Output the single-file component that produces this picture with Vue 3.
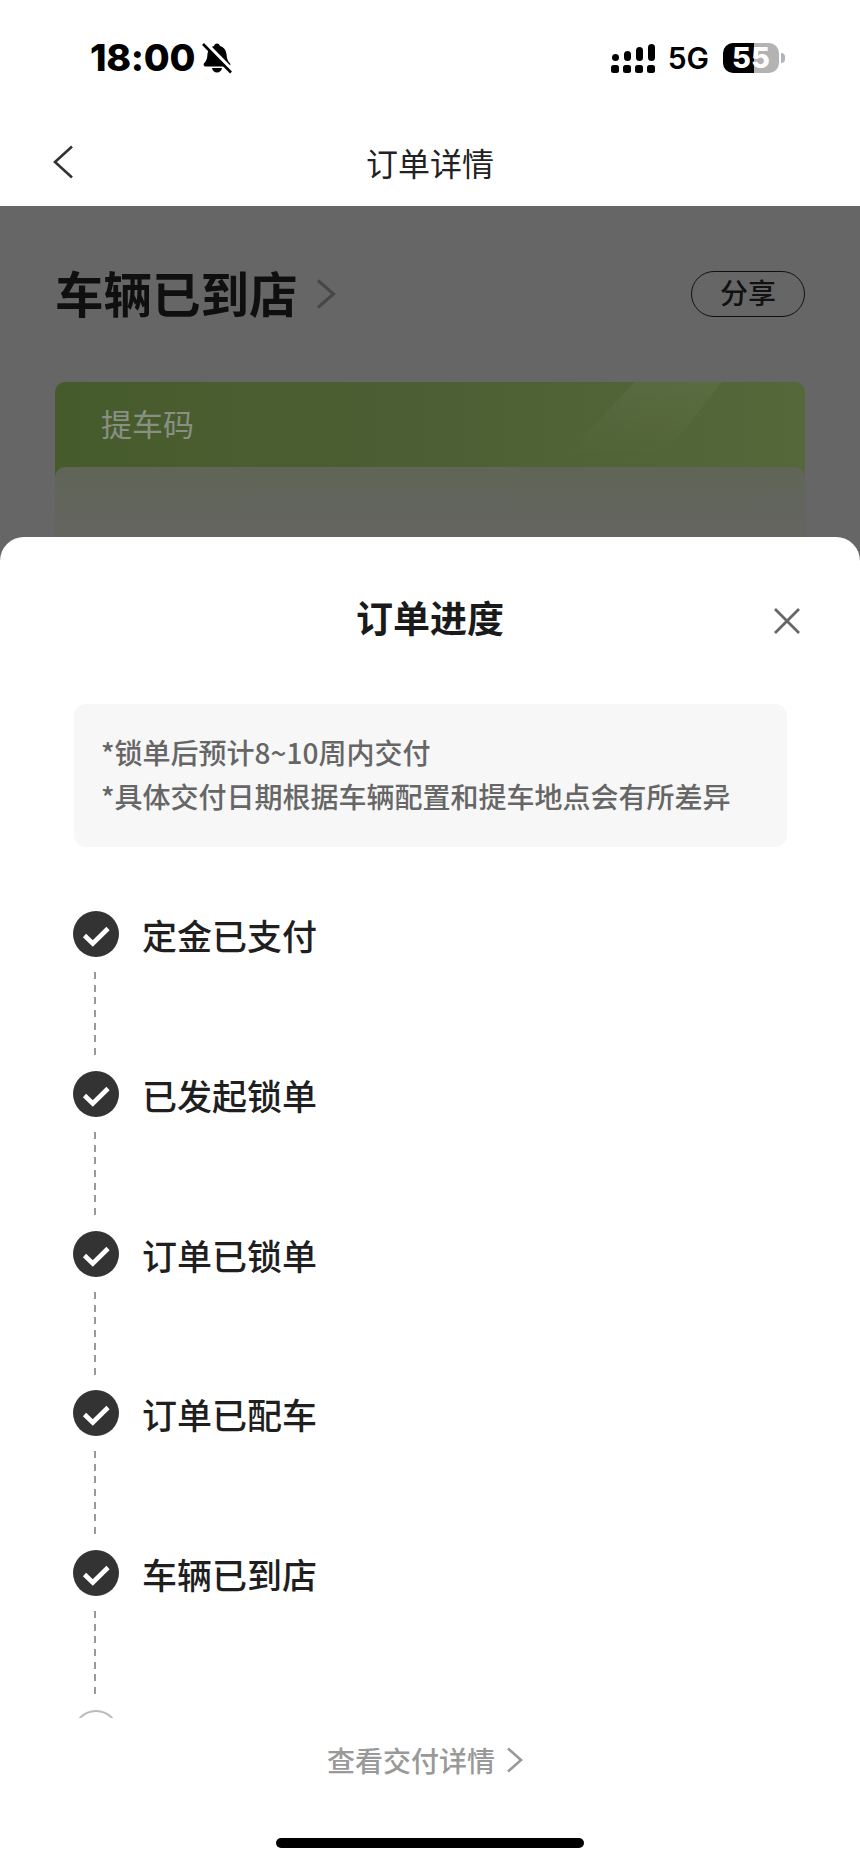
<script setup>
const steps = ['定金已支付', '已发起锁单', '订单已锁单', '订单已配车', '车辆已到店']
const signalCols = [
  { h: 7 },
  { h: 10 },
  { h: 14 },
  { h: 17 }
]
</script>

<template>
  <div class="page">
    <header class="status">
      <div class="status-left">
        <span class="time">18:00</span>
        <svg class="bell" width="30" height="32" viewBox="0 0 30 32">
          <path d="M15 1.500c1.600 0 2.700 1 2.900 2.400 4.200 1.200 6.500 4.700 6.700 9 .2 3.600 1 5.900 3.300 8.300 1.100 1.200.3 3.300-1.400 3.300H3.500c-1.700 0-2.500-2.100-1.400-3.300 2.300-2.400 3.100-4.700 3.300-8.300.2-4.300 2.500-7.800 6.700-9C12.300 2.500 13.400 1.500 15 1.500z" fill="#000"/>
          <path d="M10 26h10c-.5 2.800-2.500 4.600-5 4.600s-4.500-1.800-5-4.600z" fill="#000"/>
          <path d="M2.500 0.500 30.500 29" stroke="#fff" stroke-width="4.500"/>
          <path d="M1 2 29 30.500" stroke="#000" stroke-width="2.600"/>
        </svg>
      </div>
      <div class="status-right">
        <div class="signal">
          <span v-for="(col, i) in signalCols" :key="i" class="signal-col">
            <i class="signal-top" :style="{ height: col.h + 'px' }"></i>
            <i class="signal-dot"></i>
          </span>
        </div>
        <span class="net">5G</span>
        <div class="battery"><span class="battery-num">55</span></div>
        <i class="battery-nub"></i>
      </div>
    </header>

    <nav class="nav">
      <svg class="back" width="20" height="34" viewBox="0 0 20 34">
        <path d="M19 1.500 2 17l17 15.500" fill="none" stroke="#333" stroke-width="2.600"/>
      </svg>
      <h1 class="nav-title">订单详情</h1>
    </nav>

    <main class="behind">
      <div class="heading">
        <div class="heading-main">
          <span class="heading-text">车辆已到店</span>
          <svg width="20" height="30" viewBox="0 0 20 30">
            <path d="M2 1.500 17.500 15 2 28.500" fill="none" stroke="#474747" stroke-width="3"/>
          </svg>
        </div>
        <span class="share">分享</span>
      </div>
      <section class="code-card">
        <div class="code-head"><span>提车码</span></div>
        <div class="code-body"></div>
      </section>
    </main>

    <section class="sheet">
      <div class="sheet-head">
        <h2 class="sheet-title">订单进度</h2>
        <svg class="close" width="26" height="26" viewBox="0 0 26 26">
          <path d="M1 1l24 24M25 1 1 25" stroke="#666" stroke-width="2.800" fill="none"/>
        </svg>
      </div>

      <div class="notice">
        <p>*锁单后预计8~10周内交付</p>
        <p>*具体交付日期根据车辆配置和提车地点会有所差异</p>
      </div>

      <ol class="steps">
        <li v-for="step in steps" :key="step" class="step">
          <div class="step-row">
            <span class="dot">
              <svg width="46" height="46" viewBox="0 0 46 46">
                <path d="M11.500 24.500 19.800 32.500 35 17.500" fill="none" stroke="#fff" stroke-width="4.600"/>
              </svg>
            </span>
            <span class="step-label">{{ step }}</span>
          </div>
          <i class="dash"></i>
        </li>
        <li class="step">
          <div class="step-row"><span class="dot dot-pending"></span></div>
        </li>
      </ol>

      <div class="more">
        <span>查看交付详情</span>
        <svg width="17" height="26" viewBox="0 0 17 26">
          <path d="M2 1.500 15 13 2 24.500" fill="none" stroke="#999" stroke-width="2.600"/>
        </svg>
      </div>

      <div class="home-wrap"><i class="home"></i></div>
    </section>
  </div>
</template>

<style>
html, body { margin: 0; background: #fff; }
</style>

<style scoped>
.page {
  position: relative;
  width: 860px;
  height: 1864px;
  overflow: hidden;
  display: flex;
  flex-direction: column;
  background: #fff;
  font-family: "Noto Sans CJK SC", "Noto Sans", sans-serif;
}
.status {
  height: 116px;
  flex: none;
  display: flex;
  justify-content: space-between;
  align-items: center;
  padding: 0 75px 0 90px;
}
.status-left { display: flex; align-items: center; gap: 7px; }
.time {
  font-family: Inter, "Liberation Sans", sans-serif;
  font-size: 37.500px;
  font-weight: 800;
  line-height: 40px;
  letter-spacing: -0.3px;
  color: #000;
}
.bell { display: block; }
.status-right { display: flex; align-items: center; }
.signal { display: flex; align-items: flex-end; gap: 5px; height: 30px; margin-right: 13px; }
.signal-col { display: flex; flex-direction: column; align-items: center; gap: 4px; width: 7px; }
.signal-top { display: block; width: 7px; border-radius: 3.500px; background: #000; }
.signal-dot { display: block; width: 8px; height: 8px; border-radius: 2.500px; background: #000; }
.net {
  font-family: Inter, "Liberation Sans", sans-serif;
  font-size: 30px;
  font-weight: 600;
  line-height: 30px;
  color: #000;
  margin-right: 14px;
}
.battery {
  width: 56px;
  height: 30px;
  border-radius: 10px;
  background: linear-gradient(90deg, #000 0, #000 31px, #b3b3b3 31px, #b3b3b3 100%);
  display: flex;
  align-items: center;
  justify-content: center;
}
.battery-num {
  font-family: Inter, "Liberation Sans", sans-serif;
  font-size: 29px;
  font-weight: 800;
  line-height: 30px;
  color: #fff;
}
.battery-nub {
  display: block;
  width: 4px;
  height: 10px;
  margin-left: 2px;
  border-radius: 0 4px 4px 0;
  background: #b3b3b3;
}
.nav {
  height: 90px;
  flex: none;
  display: grid;
  grid-template-columns: 1fr auto 1fr;
  align-items: center;
  padding: 0 53px;
}
.back { display: block; margin-top: 2px; }
.nav-title {
  margin: 1px 0 0;
  font-size: 32px;
  font-weight: 400;
  line-height: 44px;
  color: #222;
}
.behind {
  flex: 1;
  background: #666;
  padding: 65px 55px 0;
}
.heading {
  display: flex;
  justify-content: space-between;
  align-items: center;
  height: 46px;
}
.heading-main { display: flex; align-items: center; gap: 18px; }
.heading-text {
  font-size: 48.500px;
  font-weight: 700;
  line-height: 46px;
  color: #0f0f0f;
  margin: -4px 0 0 0;
}
.share {
  box-sizing: border-box;
  width: 114px;
  height: 46px;
  border: 1.500px solid #111;
  border-radius: 23px;
  text-align: center;
  font-size: 28px;
  font-weight: 500;
  line-height: 41px;
  color: #111;
}
.code-card { margin-top: 65px; }
.code-head {
  position: relative;
  overflow: hidden;
  height: 97px;
  padding: 21px 46px 0;
  box-sizing: border-box;
  border-radius: 10px 10px 0 0;
  background: linear-gradient(90deg, #465b2b 0%, #4c5f34 45%, #55683a 100%);
}
.code-head::before {
  content: "";
  position: absolute;
  inset: 0;
  background: linear-gradient(180deg, rgba(255, 255, 255, 0.04), rgba(255, 255, 255, 0) 80%);
  clip-path: polygon(580px 0, 667px 0, 600px 85px, 500px 85px);
}
.code-head span {
  position: relative;
  font-size: 31px;
  font-weight: 400;
  line-height: 40px;
  color: #8a8f84;
  display: block;
}
.code-body {
  position: relative;
  height: 80px;
  border-radius: 10px 10px 0 0;
  margin-top: -12px;
  background: linear-gradient(180deg, #5f6656 0%, #62655c 40%, #646560 100%);
}
.sheet {
  position: absolute;
  left: 0;
  right: 0;
  top: 537px;
  bottom: 0;
  background: #fff;
  border-radius: 24px 24px 0 0;
  display: flex;
  flex-direction: column;
}
.sheet-head {
  position: relative;
  flex: none;
  height: 167px;
  padding-top: 56px;
  box-sizing: border-box;
  display: flex;
  justify-content: center;
  align-items: flex-start;
}
.sheet-title {
  margin: 0;
  font-size: 37px;
  font-weight: 600;
  line-height: 48px;
  color: #1a1a1a;
}
.close {
  position: absolute;
  right: 60px;
  top: 71px;
}
.notice {
  flex: none;
  margin: 0 73px 0 74px;
  height: 143px;
  box-sizing: border-box;
  padding: 26px 27px 0;
  border-radius: 12px;
  background: #f7f7f7;
}
.notice p {
  margin: 0;
  font-size: 28px;
  font-weight: 500;
  line-height: 44px;
  color: #666;
  white-space: nowrap;
  letter-spacing: 0;
}
.steps {
  flex: none;
  list-style: none;
  margin: 56px 0 0 73px;
  padding: 8px 0 0;
  height: 807px;
  overflow: hidden;
}
.step { display: block; }
.step-row { display: flex; align-items: center; height: 46px; gap: 23px; }
.dot {
  flex: none;
  display: block;
  box-sizing: border-box;
  width: 46px;
  height: 46px;
  border-radius: 50%;
  background: #333;
}
.dot svg { display: block; }
.dot-pending {
  background: #fff;
  border: 2px solid #bbb;
}
.step-label {
  font-size: 35px;
  font-weight: 500;
  line-height: 46px;
  color: #1f1f1f;
  margin-top: 2px;
}
.dash {
  display: block;
  width: 2px;
  height: 84px;
  margin: 15px 0 14.750px 21px;
  background: repeating-linear-gradient(180deg, #999 0, #999 7px, transparent 7px, transparent 12.670px);
}
.more {
  flex: none;
  margin-top: 18px;
  height: 48px;
  padding-right: 10px;
  display: flex;
  justify-content: center;
  align-items: center;
  gap: 11px;
  font-size: 28px;
  font-weight: 500;
  line-height: 48px;
  color: #999;
}
.more svg { display: block; }
.home-wrap {
  flex: 1;
  display: flex;
  justify-content: center;
  padding-top: 54px;
}
.home {
  display: block;
  width: 308px;
  height: 10px;
  border-radius: 5px;
  background: #000;
}
</style>
